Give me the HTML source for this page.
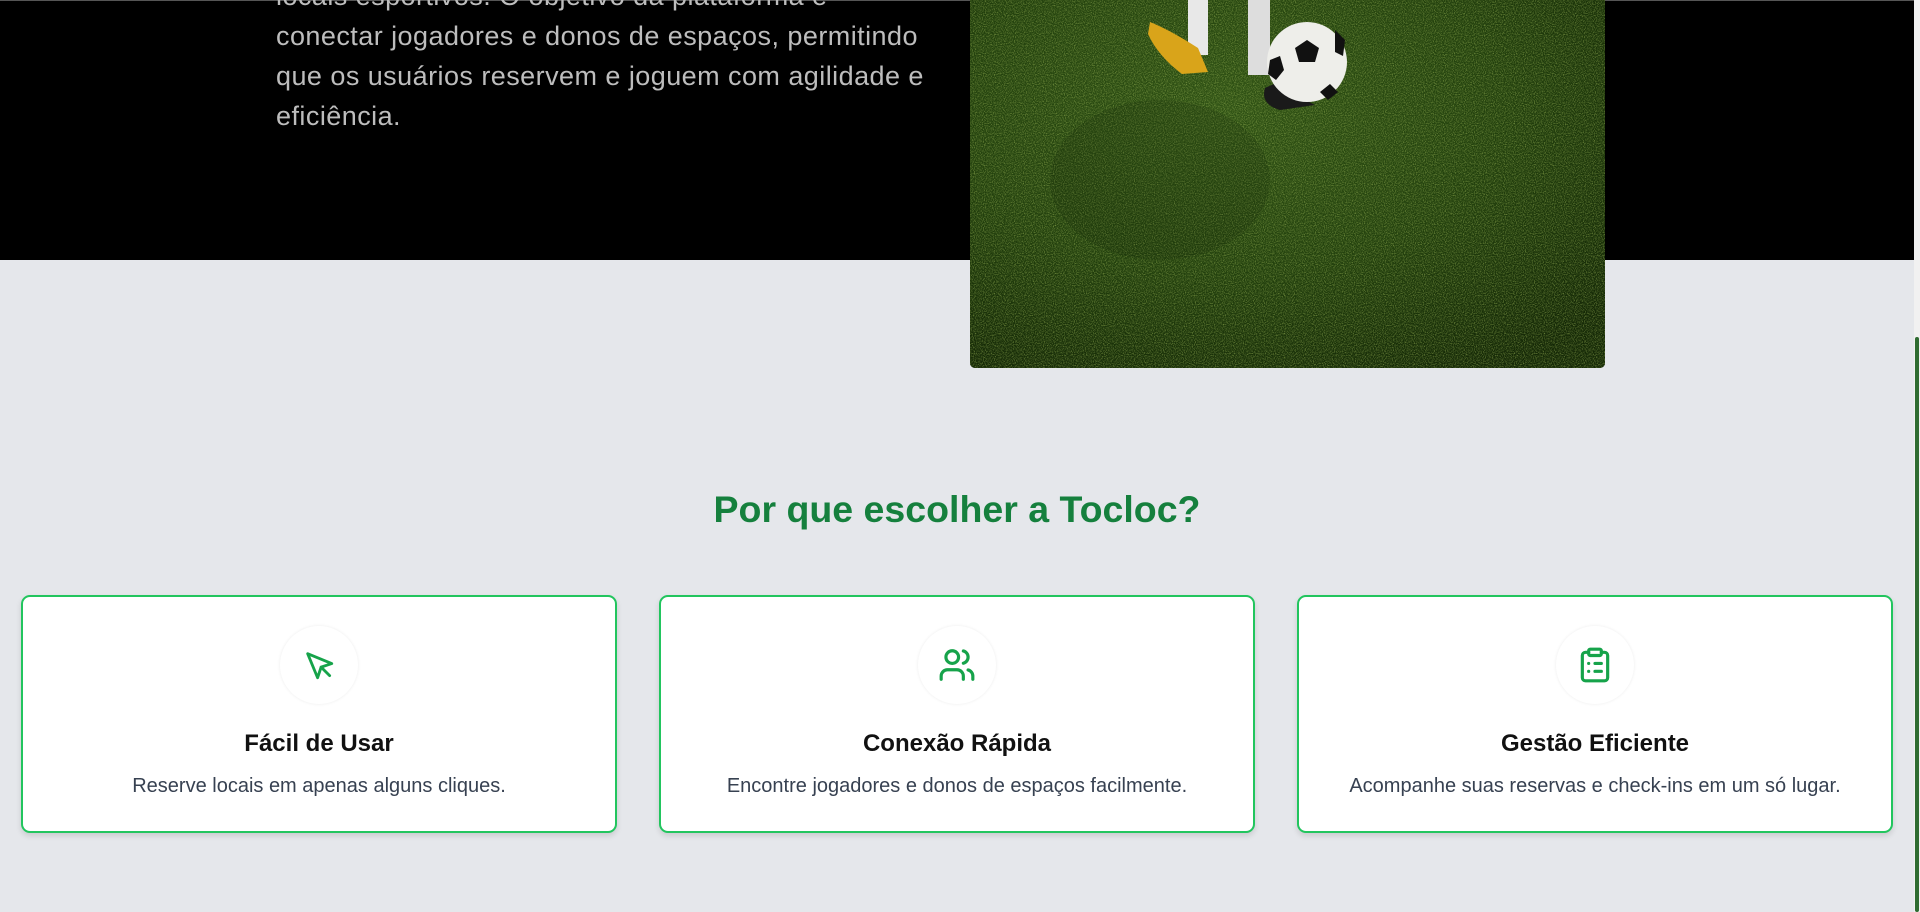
<!DOCTYPE html>
<html><head><meta charset="utf-8"><style>
*{margin:0;padding:0;box-sizing:border-box}
body{width:1920px;height:912px;overflow:hidden;background:#e5e7eb;font-family:"Liberation Sans",sans-serif;position:relative}
.top{position:absolute;left:0;top:0;width:1914px;height:260px;background:#000;border-top:1px solid #555}
.para{position:absolute;left:276px;top:-25px;color:#bdbdbd;font-size:27px;letter-spacing:0.45px;line-height:40px;white-space:nowrap}
.img{position:absolute;left:970px;top:0;width:635px;height:368px;border-radius:0 0 5px 5px;overflow:hidden;background:#2c4a14}
.sb{position:absolute;left:1914px;top:0;width:6px;height:912px;background:#f1f1f1}
.sb div{position:absolute;left:1px;top:337px;width:4px;height:575px;background:#2e6b30;border-radius:2px}
h2{position:absolute;left:0;width:1914px;top:488px;text-align:center;color:#15803d;font-size:37.5px;font-weight:bold}
.card{position:absolute;top:595px;width:596px;height:238px;background:#fff;border:2px solid #22c55e;border-radius:9px;box-shadow:0 3px 6px rgba(0,0,0,.12);text-align:center}
.circ{position:absolute;left:50%;margin-left:-39px;top:29px;width:78px;height:78px;border-radius:50%;box-shadow:0 0 3px rgba(0,0,0,.08);display:flex;align-items:center;justify-content:center}
.card h3{position:absolute;top:133px;width:100%;font-size:24px;font-weight:bold;color:#111}
.card p{position:absolute;top:178px;width:100%;font-size:20px;color:#374151}
</style></head><body>
<div class="top"><div class="para">locais esportivos. O objetivo da plataforma é<br>conectar jogadores e donos de espaços, permitindo<br>que os usuários reservem e joguem com agilidade e<br>eficiência.</div></div>
<div class="img">
<svg width="635" height="368" viewBox="0 0 635 368">
<defs>
<filter id="n" x="0" y="0" width="100%" height="100%"><feTurbulence type="fractalNoise" baseFrequency="0.9" numOctaves="2" seed="3"/><feColorMatrix values="0 0 0 0 0.4  0 0 0 0 0.55  0 0 0 0 0.12  0 0 0 1.4 -0.6"/></filter>
<radialGradient id="g" cx="40%" cy="30%" r="80%"><stop offset="0" stop-color="#2f5214"/><stop offset=".55" stop-color="#22400d"/><stop offset="1" stop-color="#142806"/></radialGradient>
</defs>
<rect width="635" height="368" fill="url(#g)"/>
<rect width="635" height="368" filter="url(#n)"/>
<ellipse cx="190" cy="180" rx="110" ry="80" fill="#0c1a04" opacity=".15"/>
<rect x="218" y="0" width="20" height="55" fill="#e8e8e8"/>
<rect x="278" y="0" width="22" height="75" fill="#ddd"/>
<path d="M180 22 Q200 30 228 48 L238 72 L212 74 Q188 56 178 34Z" fill="#d9a41a"/>
<path d="M308 82 Q325 95 345 105 L310 110 Q290 104 295 88Z" fill="#1a1a1a"/>
<circle cx="337" cy="62" r="40" fill="#eeeeea"/>
<path d="M337 40 l12 8 -4 14 -16 0 -4 -14z" fill="#111"/><path d="M300 60 l10 -4 4 14 -8 10 -8 -6z" fill="#111"/><path d="M365 30 l10 10 -2 16 -8 -4z" fill="#111"/><path d="M350 92 l10 -8 8 8 -10 8z" fill="#111"/>
</svg></div>
<div class="sb"><div></div></div>
<h2>Por que escolher a Tocloc?</h2>
<div class="card" style="left:21px"><div class="circ"><svg width="34" height="34" viewBox="0 0 24 24" fill="none" stroke="#16a34a" stroke-width="2" stroke-linecap="round" stroke-linejoin="round"><path d="M4 4l7 17 2.5-7.5L21 11z"/><path d="M13.5 13.5l6 6"/></svg></div><h3>Fácil de Usar</h3><p>Reserve locais em apenas alguns cliques.</p></div>
<div class="card" style="left:659px"><div class="circ"><svg width="38" height="38" viewBox="0 0 24 24" fill="none" stroke="#16a34a" stroke-width="2" stroke-linecap="round" stroke-linejoin="round"><path d="M16 21v-2a4 4 0 0 0-4-4H6a4 4 0 0 0-4 4v2"/><circle cx="9" cy="7" r="4"/><path d="M22 21v-2a4 4 0 0 0-3-3.87"/><path d="M16 3.13a4 4 0 0 1 0 7.75"/></svg></div><h3>Conexão Rápida</h3><p>Encontre jogadores e donos de espaços facilmente.</p></div>
<div class="card" style="left:1297px"><div class="circ"><svg width="38" height="38" viewBox="0 0 24 24" fill="none" stroke="#16a34a" stroke-width="2" stroke-linecap="round" stroke-linejoin="round"><rect x="8" y="2" width="8" height="4" rx="1"/><path d="M16 4h2a2 2 0 0 1 2 2v14a2 2 0 0 1-2 2H6a2 2 0 0 1-2-2V6a2 2 0 0 1 2-2h2"/><path d="M12 11h4M12 16h4M8 11h.01M8 16h.01"/></svg></div><h3>Gestão Eficiente</h3><p>Acompanhe suas reservas e check-ins em um só lugar.</p></div>
</body></html>
